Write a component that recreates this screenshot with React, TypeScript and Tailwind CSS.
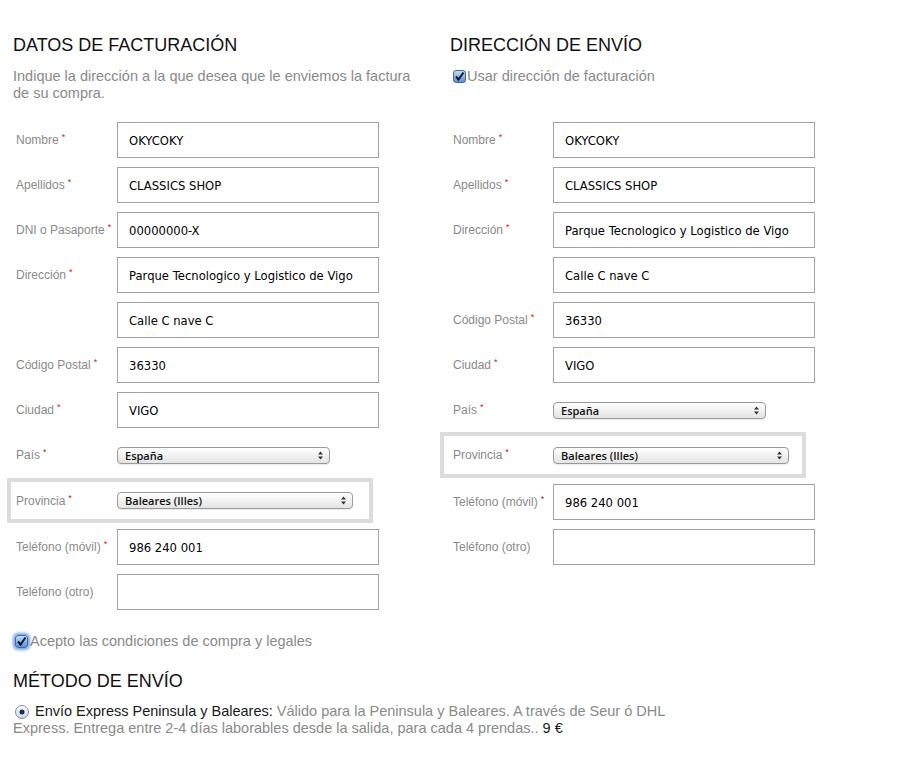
import React from "react";

const gray = "text-[#8a8a8a]";

function Req() {
    return <span className="ml-[3px] align-top text-[9px] leading-[12px] text-[#dd1111]">*</span>;
}

function Check({ glow }: { glow?: boolean }) {
    return (
        <span
            className={`inline-flex h-[13px] w-[13px] shrink-0 items-center justify-center rounded-[3px] border border-[#46689a] bg-gradient-to-b from-[#c4dbf5] to-[#5d8fd3] ${glow ? "shadow-[0_0_3px_2px_rgba(80,140,230,0.8)]" : ""}`}
        >
            <svg width="11" height="11" viewBox="0 0 11 11">
                <path d="M2 5.5 L4.5 8.5 L9.5 1.5" fill="none" stroke="#0e1a35" strokeWidth="2" />
            </svg>
        </span>
    );
}

function Radio() {
    return (
        <svg width="14" height="14" viewBox="0 0 14 14" className="ml-[2px] mr-[6px] inline-block align-[-3px]">
            <defs>
                <linearGradient id="rg" x1="0" y1="0" x2="0" y2="1">
                    <stop offset="0" stopColor="#ffffff" />
                    <stop offset="1" stopColor="#c5d9f1" />
                </linearGradient>
            </defs>
            <circle cx="7" cy="7" r="6.5" fill="url(#rg)" stroke="#8c8c8c" />
            <circle cx="7" cy="7" r="2.5" fill="#1b2b4a" />
        </svg>
    );
}

function Label({ text, req, w }: { text: string; req?: boolean; w: string }) {
    return (
        <div className={`${w} shrink-0 text-[12px] ${gray}`}>
            {text}
            {req && <Req />}
        </div>
    );
}

function Field({ label, req, value, w, mt }: { label: string; req?: boolean; value: string; w: string; mt: string }) {
    return (
        <div className={`flex h-[36px] items-center pl-[3px] ${mt}`}>
            <Label text={label} req={req} w={w} />
            <div
                className="flex h-[36px] w-[262px] items-center border border-[#a3a3a3] bg-white pl-[11px] pt-[3px] text-[11.6px] text-black"
                style={{ fontFamily: '"DejaVu Sans", sans-serif' }}
            >
                {value}
            </div>
        </div>
    );
}

function Select({ value, width }: { value: string; width: string }) {
    return (
        <div
            className={`${width} flex h-[17px] items-center justify-between rounded-[4px] border border-[#9a9a9a] bg-gradient-to-b from-[#ffffff] to-[#e4e4e4] pl-[7px] pr-[6px] text-[11px] font-semibold text-[#111] shadow-[0_1px_0_rgba(0,0,0,0.08)]`}
            style={{ fontFamily: '"Open Sans", sans-serif' }}
        >
            <span className="leading-[15px]">{value}</span>
            <svg width="5" height="9" viewBox="0 0 5 9">
                <path d="M0 3.5 L2.5 0.5 L5 3.5 Z M0 5.5 L2.5 8.5 L5 5.5 Z" fill="#333" />
            </svg>
        </div>
    );
}

function SelectRow({ label, value, width, w, mt }: { label: string; value: string; width: string; w: string; mt: string }) {
    return (
        <div className={`flex h-[36px] items-center pl-[3px] ${mt}`}>
            <Label text={label} req w={w} />
            <Select value={value} width={width} />
        </div>
    );
}

function ProvinciaBox({ w, className }: { w: string; className: string }) {
    return (
        <div className={`flex w-[366px] items-center border-4 border-[#dcdcdc] ${className}`}>
            <Label text="Provincia" req w={w} />
            <Select value="Baleares (Illes)" width="w-[236px]" />
        </div>
    );
}

export default function App() {
    return (
        <div
            className="min-h-[771px] w-[921px] bg-white pl-[13px] pt-[34px]"
            style={{ fontFamily: '"Liberation Sans", Arial, sans-serif' }}
        >
            <div className="grid grid-cols-[437px_1fr]">
                {/* Datos de facturación */}
                <div className="flex flex-col">
                    <div className="h-[88px]">
                        <h2 className="text-[18px] leading-[22px] text-[#111]">DATOS DE FACTURACIÓN</h2>
                        <p className={`mt-[12px] text-[14.5px] leading-[17px] ${gray}`}>
                            Indique la dirección a la que desea que le enviemos la factura
                            <br />
                            de su compra.
                        </p>
                    </div>
                    <Field label="Nombre" req value="OKYCOKY" w="w-[101px]" mt="" />
                    <Field label="Apellidos" req value="CLASSICS SHOP" w="w-[101px]" mt="mt-[9px]" />
                    <Field label="DNI o Pasaporte" req value="00000000-X" w="w-[101px]" mt="mt-[9px]" />
                    <Field label="Dirección" req value="Parque Tecnologico y Logistico de Vigo" w="w-[101px]" mt="mt-[9px]" />
                    <Field label="" value="Calle C nave C" w="w-[101px]" mt="mt-[9px]" />
                    <Field label="Código Postal" req value="36330" w="w-[101px]" mt="mt-[9px]" />
                    <Field label="Ciudad" req value="VIGO" w="w-[101px]" mt="mt-[9px]" />
                    <SelectRow label="País" value="España" width="w-[213px]" w="w-[101px]" mt="mt-[9px]" />
                    <ProvinciaBox w="w-[101px]" className="-ml-[6px] mt-[5px] h-[45px] pl-[5px]" />
                    <Field label="Teléfono (móvil)" req value="986 240 001" w="w-[101px]" mt="mt-[6px]" />
                    <Field label="Teléfono (otro)" value="" w="w-[101px]" mt="mt-[9px]" />
                </div>

                {/* Dirección de envío */}
                <div className="flex flex-col">
                    <div className="h-[88px]">
                        <h2 className="text-[18px] leading-[22px] text-[#111]">DIRECCIÓN DE ENVÍO</h2>
                        <div className={`mt-[12px] flex h-[17px] items-center pl-[3px] text-[14.5px] leading-[17px] ${gray}`}>
                            <Check />
                            <span className="ml-[1px]">Usar dirección de facturación</span>
                        </div>
                    </div>
                    <Field label="Nombre" req value="OKYCOKY" w="w-[100px]" mt="" />
                    <Field label="Apellidos" req value="CLASSICS SHOP" w="w-[100px]" mt="mt-[9px]" />
                    <Field label="Dirección" req value="Parque Tecnologico y Logistico de Vigo" w="w-[100px]" mt="mt-[9px]" />
                    <Field label="" value="Calle C nave C" w="w-[100px]" mt="mt-[9px]" />
                    <Field label="Código Postal" req value="36330" w="w-[100px]" mt="mt-[9px]" />
                    <Field label="Ciudad" req value="VIGO" w="w-[100px]" mt="mt-[9px]" />
                    <SelectRow label="País" value="España" width="w-[213px]" w="w-[100px]" mt="mt-[9px]" />
                    <ProvinciaBox w="w-[100px]" className="-ml-[10px] mt-[4px] h-[46px] pl-[9px]" />
                    <Field label="Teléfono (móvil)" req value="986 240 001" w="w-[100px]" mt="mt-[6px]" />
                    <Field label="Teléfono (otro)" value="" w="w-[100px]" mt="mt-[9px]" />
                </div>
            </div>

            <div className={`mt-[23px] flex h-[17px] items-center pl-[2px] text-[14.5px] leading-[17px] ${gray}`}>
                <Check glow />
                <span className="ml-[2px]">Acepto las condiciones de compra y legales</span>
            </div>

            <h2 className="mt-[20px] text-[18px] leading-[22px] text-[#111]">MÉTODO DE ENVÍO</h2>
            <p className={`mt-[11px] w-[680px] text-[14.5px] leading-[17px] ${gray}`}>
                <Radio />
                <span className="text-[#1a1a1a]">Envío Express Peninsula y Baleares:</span> Válido para la Peninsula y
                Baleares. A través de Seur ó DHL Express. Entrega entre 2-4 días laborables desde la salida, para cada 4
                prendas.. <span className="text-[#1a1a1a]">9 €</span>
            </p>
        </div>
    );
}
